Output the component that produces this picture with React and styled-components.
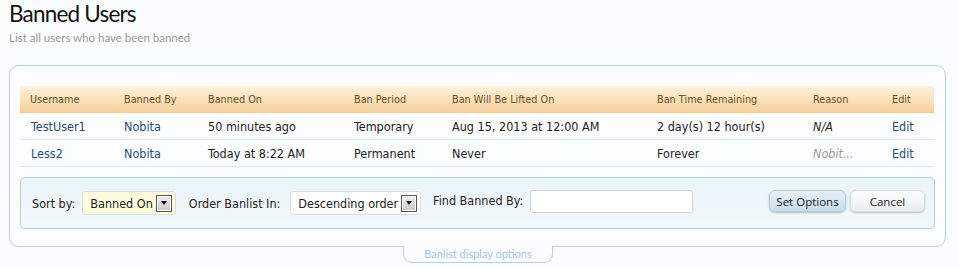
import React from "react";
import styled, { createGlobalStyle } from "styled-components";

const GlobalStyle = createGlobalStyle`
  html, body { margin: 0; padding: 0; background: #fbfcfe; }
  body { font-family: "DejaVu Sans Condensed", "DejaVu Sans", Tahoma, sans-serif; color: #222; }
`;

const Page = styled.div`
  padding: 0 13px 0 9px;
  width: 959px;
  box-sizing: border-box;
`;

const Title = styled.h1`
  margin: 0;
  font-family: Lato, "Open Sans", sans-serif;
  font-weight: 400;
  font-size: 22.5px;
  line-height: 28px;
  letter-spacing: -0.8px;
  color: #111;
`;

const Subtitle = styled.p`
  margin: 3px 0 0;
  font-family: Lato, "Open Sans", sans-serif;
  font-size: 11.5px;
  line-height: 14px;
  color: #999;
`;

const PanelWrap = styled.div`
  margin-top: 20px;
`;

const Panel = styled.div`
  border: 1px solid #b6d1da;
  border-radius: 10px;
  background: #fcfdff;
  padding: 20px 10px 19px 10px;
  height: 182px;
  box-sizing: border-box;
`;

const Table = styled.table`
  width: 914px;
  border-collapse: collapse;
  table-layout: fixed;
`;

const HeadCell = styled.th`
  text-align: left;
  font-weight: 400;
  font-size: 10.8px;
  color: #6b4b22;
  height: 26px;
  padding: 0 0 0 10px;
  background: linear-gradient(to bottom, #fdf1dc 0%, #fbe1b8 55%, #f8d29c 100%);
  border-bottom: 1px solid #efc88e;
`;

const Cell = styled.td`
  font-size: 12.5px;
  height: 26px;
  padding: 0 0 0 ${p => (p.$pad ? p.$pad : 10)}px;
  border-bottom: 1px solid #d8ebf5;
  color: ${p => (p.$link ? "#2b4b73" : p.$muted ? "#9a9a9a" : "#222")};
  font-style: ${p => (p.$italic ? "italic" : "normal")};
  font-synthesis: none;
  white-space: nowrap;
`;

const OptionsBar = styled.div`
  margin-top: 10px;
  height: 52px;
  box-sizing: border-box;
  border: 1px solid #b3d0d9;
  border-radius: 5px;
  background: linear-gradient(to bottom, #eaf4fa, #f2f8fc);
  display: flex;
  align-items: center;
  padding: 0 9px 0 11px;
  font-size: 12.5px;
  color: #222;
`;

const Label = styled.span`
  margin-right: ${p => p.$gap || 7}px;
  margin-top: ${p => (p.$raise ? "-6px" : "0")};
`;

const Select = styled.div`
  display: flex;
  align-items: center;
  height: 24px;
  box-sizing: border-box;
  border: 1px solid #dcdcdc;
  border-radius: 3px;
  background: ${p => (p.$highlight ? "#fffbdc" : "#fff")};
  padding: 0 3px 0 7px;
  margin-right: ${p => p.$after || 13}px;
  gap: 3px;
  font-size: 12.5px;
`;

const Arrow = styled.span`
  width: 16px;
  height: 17px;
  box-sizing: border-box;
  border: 1px solid #555;
  box-shadow: inset 0 0 0 1px #fff;
  background: linear-gradient(to bottom, #f0f0f0, #c9c9c9);
  display: flex;
  align-items: center;
  justify-content: center;
  &::after {
    content: "";
    border-left: 3.5px solid transparent;
    border-right: 3.5px solid transparent;
    border-top: 4px solid #111;
  }
`;

const TextInput = styled.input`
  width: 163px;
  height: 23px;
  box-sizing: border-box;
  border: 1px solid #cfd6da;
  border-radius: 3px;
  background: #fff;
  margin-top: -4px;
`;

const Spacer = styled.div`
  flex: 1;
`;

const Button = styled.button`
  font-family: "Open Sans", sans-serif;
  font-size: 11.5px;
  height: 22px;
  padding: 0;
  width: ${p => p.$w}px;
  margin-left: 4px;
  margin-top: -4px;
  border: 1px solid ${p => (p.$primary ? "#b5cbd8" : "#d8dde0")};
  border-radius: 6px;
  color: #222;
  background: ${p =>
    p.$primary
      ? "linear-gradient(to bottom, #e6f1f8, #c6dcea)"
      : "linear-gradient(to bottom, #ffffff, #e9ecef)"};
  box-shadow: 0 1px 2px rgba(0, 0, 0, 0.25);
`;

// tab hangs under the panel and covers its bottom border
const Tab = styled.div`
  position: relative;
  margin: -1px 0 0 394px;
  width: 150px;
  height: 17px;
  box-sizing: border-box;
  border: 1px solid #b6d1da;
  border-top: none;
  border-radius: 0 0 9px 9px;
  background: #fbfcfe;
  font-family: Lato, "Open Sans", sans-serif;
  font-size: 11px;
  line-height: 15px;
  color: #a9c6dc;
  text-align: center;
`;

const columns = [
  ["Username", 94],
  ["Banned By", 84],
  ["Banned On", 146],
  ["Ban Period", 98],
  ["Ban Will Be Lifted On", 205],
  ["Ban Time Remaining", 156],
  ["Reason", 79],
  ["Edit", 52],
];

const bans = [
  {
    user: "TestUser1",
    by: "Nobita",
    on: "50 minutes ago",
    period: "Temporary",
    lifted: "Aug 15, 2013 at 12:00 AM",
    remaining: "2 day(s) 12 hour(s)",
    reason: "N/A",
    muted: false,
  },
  {
    user: "Less2",
    by: "Nobita",
    on: "Today at 8:22 AM",
    period: "Permanent",
    lifted: "Never",
    remaining: "Forever",
    reason: "Nobit...",
    muted: true,
  },
];

export default function App() {
  return (
    <>
      <GlobalStyle />
      <Page>
        <Title>Banned Users</Title>
        <Subtitle>List all users who have been banned</Subtitle>
        <PanelWrap>
          <Panel>
            <Table>
              <colgroup>
                {columns.map(([name, w]) => (
                  <col key={name} style={{ width: w }} />
                ))}
              </colgroup>
              <thead>
                <tr>
                  {columns.map(([name]) => (
                    <HeadCell key={name}>{name}</HeadCell>
                  ))}
                </tr>
              </thead>
              <tbody>
                {bans.map(b => (
                  <tr key={b.user}>
                    <Cell $link $pad={11}>{b.user}</Cell>
                    <Cell $link>{b.by}</Cell>
                    <Cell>{b.on}</Cell>
                    <Cell>{b.period}</Cell>
                    <Cell>{b.lifted}</Cell>
                    <Cell>{b.remaining}</Cell>
                    <Cell $italic $muted={b.muted}>{b.reason}</Cell>
                    <Cell $link>Edit</Cell>
                  </tr>
                ))}
              </tbody>
            </Table>
            <OptionsBar>
              <Label>Sort by:</Label>
              <Select $highlight>
                Banned On <Arrow />
              </Select>
              <Label $gap={10}>Order Banlist In:</Label>
              <Select $after={12}>
                Descending order <Arrow />
              </Select>
              <Label $raise>Find Banned By:</Label>
              <TextInput type="text" />
              <Spacer />
              <Button $primary $w={77}>Set Options</Button>
              <Button $w={75}>Cancel</Button>
            </OptionsBar>
          </Panel>
          <Tab>Banlist display options</Tab>
        </PanelWrap>
      </Page>
    </>
  );
}
